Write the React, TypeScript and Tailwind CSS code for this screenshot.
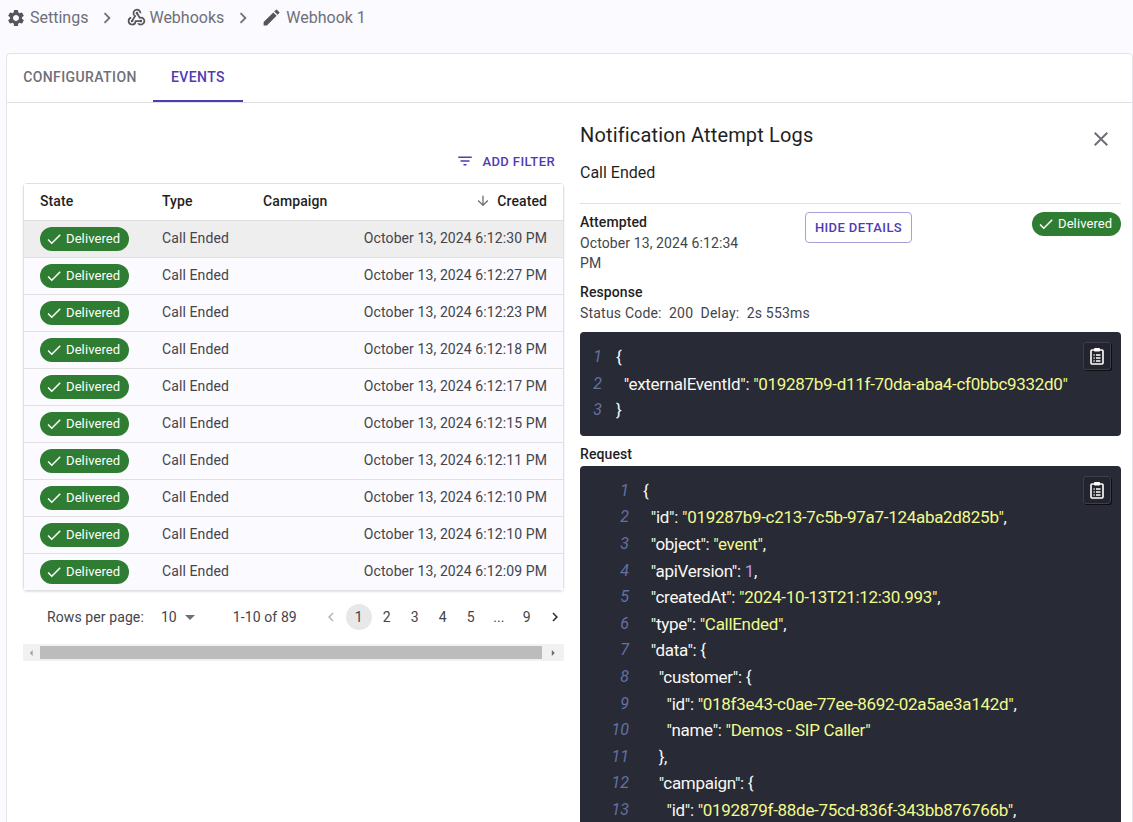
import React from 'react';
import {
  MdSettings,
  MdWebhook,
  MdEdit,
  MdChevronRight,
  MdChevronLeft,
  MdClose,
  MdFilterList,
  MdArrowDownward,
  MdArrowDropDown,
  MdCheck,
  MdArrowLeft,
  MdArrowRight,
} from 'react-icons/md';

const rows = [
  { time: 'October 13, 2024 6:12:30 PM', selected: true },
  { time: 'October 13, 2024 6:12:27 PM' },
  { time: 'October 13, 2024 6:12:23 PM' },
  { time: 'October 13, 2024 6:12:18 PM' },
  { time: 'October 13, 2024 6:12:17 PM' },
  { time: 'October 13, 2024 6:12:15 PM' },
  { time: 'October 13, 2024 6:12:11 PM' },
  { time: 'October 13, 2024 6:12:10 PM' },
  { time: 'October 13, 2024 6:12:10 PM' },
  { time: 'October 13, 2024 6:12:09 PM' },
];

type Tok = { t: string; c?: 'key' | 'str' | 'num' };

const Key = (t: string): Tok => ({ t, c: 'key' });
const Str = (t: string): Tok => ({ t, c: 'str' });
const Num = (t: string): Tok => ({ t, c: 'num' });

const responseLines: Tok[][] = [
  [Key('{')],
  [Key('  "externalEventId": '), Str('"019287b9-d11f-70da-aba4-cf0bbc9332d0"')],
  [Key('}')],
];

const requestLines: Tok[][] = [
  [Key('{')],
  [Key('  "id": '), Str('"019287b9-c213-7c5b-97a7-124aba2d825b"'), Key(',')],
  [Key('  "object": '), Str('"event"'), Key(',')],
  [Key('  "apiVersion": '), Num('1'), Key(',')],
  [Key('  "createdAt": '), Str('"2024-10-13T21:12:30.993"'), Key(',')],
  [Key('  "type": '), Str('"CallEnded"'), Key(',')],
  [Key('  "data": {')],
  [Key('    "customer": {')],
  [Key('      "id": '), Str('"018f3e43-c0ae-77ee-8692-02a5ae3a142d"'), Key(',')],
  [Key('      "name": '), Str('"Demos - SIP Caller"')],
  [Key('    },')],
  [Key('    "campaign": {')],
  [Key('      "id": '), Str('"0192879f-88de-75cd-836f-343bb876766b"'), Key(',')],
];

function Chip() {
  return (
    <span className="inline-flex items-center h-6 w-[89px] rounded-full bg-[#2e7d32] text-white text-[13px] pl-[5px]">
      <MdCheck size={18} className="shrink-0" />
      <span className="ml-[3px]">Delivered</span>
    </span>
  );
}

function ClipboardIcon() {
  return (
    <svg width="14" height="18" viewBox="0 0 14 18" fill="none" stroke="currentColor">
      <rect x="1" y="3" width="12" height="14" rx="1" strokeWidth="1.6" />
      <rect x="4" y="1" width="6" height="3.5" rx="0.8" fill="currentColor" stroke="none" />
      <path d="M3.5 8h1.2M6 8h4.5M3.5 11h1.2M6 11h4.5M3.5 14h1.2M6 14h4.5" strokeWidth="1.3" />
    </svg>
  );
}

function CodeBlock({ lines, numWidth }: { lines: Tok[][]; numWidth: string }) {
  return (
    <div className="relative bg-[#282a36] rounded pt-[12px] pb-[12px] text-[16px] leading-[26.6px] text-[#f8f8f2]">
      <button className="absolute top-[10px] right-[10px] w-[28px] h-[28px] flex items-center justify-center rounded-[3px] border border-[#3c3e49] bg-[#23242e] shadow-[1px_1px_0_#0d0d12] text-white">
        <ClipboardIcon />
      </button>
      {lines.map((line, i) => (
        <div key={i} className="flex">
          <span className={`${numWidth} shrink-0 text-right italic text-[#6272a4]`}>{i + 1}</span>
          <span className="pl-[14px] whitespace-pre text-[17px] tracking-[-0.3px]">
            {line.map((tok, j) => (
              <span
                key={j}
                className={tok.c === 'str' ? 'text-[#f1fa8c]' : tok.c === 'num' ? 'text-[#bd93f9]' : 'text-[#f8f8f2]'}
              >
                {tok.t}
              </span>
            ))}
          </span>
        </div>
      ))}
    </div>
  );
}

export default function App() {
  return (
    <div className="h-screen overflow-hidden bg-[#fafaff] font-['Roboto',sans-serif] text-[#1f1f24]">
      {/* Breadcrumbs */}
      <div className="h-[53px] pb-[18px] pl-[6px] flex items-center text-[16px] text-[#6f6f78]">
        <MdSettings size={20} className="text-[#55555c]" />
        <span className="ml-[4px]">Settings</span>
        <MdChevronRight size={22} className="ml-[8px] text-[#6f6f78]" />
        <MdWebhook size={21} className="ml-[8px] text-[#55555c]" />
        <span className="ml-[2px]">Webhooks</span>
        <MdChevronRight size={22} className="ml-[8px] text-[#6f6f78]" />
        <MdEdit size={21} className="ml-[7px] text-[#55555c]" />
        <span className="ml-[4px]">Webhook 1</span>
      </div>

      {/* Card */}
      <div className="ml-[6px] bg-white border border-[#e3e3e8] rounded-t h-[780px]">
        <div className="flex h-[49px] border-b border-[#e0e0e0] text-[14px] font-medium tracking-[0.4px]">
          <div className="w-[146px] h-[48px] flex items-center justify-center text-[#6f6f78] border-b-2 border-transparent">
            CONFIGURATION
          </div>
          <div className="w-[90px] h-[48px] flex items-center justify-center text-[#4f3bb3] border-b-2 border-[#4f3bb3]">
            EVENTS
          </div>
        </div>

        <div className="flex pl-4 pr-[11px]">
          {/* Left column */}
          <div className="w-[541px] shrink-0">
            <div className="h-[80px] flex items-end justify-end pb-[12px] pr-[9px] text-[13px] font-medium tracking-[0.4px] text-[#4f3bb3]">
              <MdFilterList size={18} className="mr-[8px] mb-[1px]" />
              <span>ADD FILTER</span>
            </div>

            <div className="rounded border border-[#e0e0e0] shadow-[0_1px_2px_rgba(0,0,0,0.12)] text-[14px] tracking-[0.1px]">
              <div className="flex items-center h-[36px] px-4 pb-[2px] font-medium bg-white">
                <div className="w-[122px]">State</div>
                <div className="w-[101px]">Type</div>
                <div>Campaign</div>
                <div className="ml-auto flex items-center">
                  <MdArrowDownward size={16} className="mr-[6px] text-[#6f6f78]" />
                  Created
                </div>
              </div>
              {rows.map((row, i) => (
                <div
                  key={i}
                  className={`flex items-center h-[37px] px-4 pb-px border-t border-[#e0e0e0] text-[#44444c] ${
                    row.selected ? 'bg-[#eeeeee]' : 'bg-[#fafaff]'
                  }`}
                >
                  <div className="w-[122px] flex">
                    <Chip />
                  </div>
                  <div className="w-[101px]">Call Ended</div>
                  <div className="ml-auto">{row.time}</div>
                </div>
              ))}
            </div>

            {/* Pagination */}
            <div className="flex items-center h-[52px] text-[14px] tracking-[0.1px] text-[#44444c] whitespace-nowrap">
              <span className="ml-[24px] shrink-0">Rows per page:</span>
              <span className="ml-[17px] shrink-0">10</span>
              <MdArrowDropDown size={24} className="ml-[1px] shrink-0 text-[#6f6f78]" />
              <span className="ml-[31px] shrink-0">1-10 of 89</span>
              <div className="ml-[21px] shrink-0 flex gap-[2px] items-center">
                <span className="w-[26px] h-[26px] flex items-center justify-center text-[#b5b5ba]">
                  <MdChevronLeft size={18} />
                </span>
                {['1', '2', '3', '4', '5', '...', '9'].map((p) => (
                  <span
                    key={p}
                    className={`w-[26px] h-[26px] flex items-center justify-center rounded-full ${
                      p === '1' ? 'bg-[#e8e8ea]' : ''
                    }`}
                  >
                    {p}
                  </span>
                ))}
                <span className="w-[26px] h-[26px] flex items-center justify-center text-[#2b2b30]">
                  <MdChevronRight size={18} />
                </span>
              </div>
            </div>

            {/* Horizontal scrollbar */}
            <div className="mt-px flex items-center h-[17px] bg-[#f1f1f1] text-[#6b6b6b]">
              <MdArrowLeft size={14} className="w-[17px] shrink-0 text-[#a3a3a3]" />
              <div className="h-[13px] flex-1 bg-[#bcbcbc]" />
              <MdArrowRight size={14} className="w-[22px] shrink-0" />
            </div>
          </div>

          {/* Right column */}
          <div className="ml-4 w-[541px] shrink-0">
            <div className="flex items-start justify-between pt-[20px]">
              <div className="text-[20px] leading-[24px] tracking-[0.15px]">Notification Attempt Logs</div>
              <MdClose size={24} className="mt-[4px] text-[#6f6f78] mr-[8px]" />
            </div>
            <div className="mt-[10px] text-[16px] leading-[24px]">Call Ended</div>
            <div className="mt-[18px] border-t border-[#e0e0e0]" />

            <div className="mt-2 flex items-start text-[14px] leading-[20px] tracking-[0.1px]">
              <div className="w-[225px] pr-[50px] text-[#44444c]">
                <div className="font-medium text-[#1f1f24]">Attempted</div>
                <div className="mt-px">October 13, 2024 6:12:34 PM</div>
              </div>
              <button className="w-[107px] h-[31px] rounded border border-[#a9a0db] text-[13px] font-medium tracking-[0.4px] text-[#4f3bb3]">
                HIDE DETAILS
              </button>
              <div className="ml-auto flex">
                <Chip />
              </div>
            </div>

            <div className="mt-[9px] text-[14px] leading-[20px] font-medium tracking-[0.1px]">Response</div>
            <div className="mt-px text-[14px] leading-[20px] text-[#44444c] whitespace-pre tracking-[0.2px]">
              Status Code:  200  Delay:  2s 553ms
            </div>

            <div className="mt-[9px]">
              <CodeBlock lines={responseLines} numWidth="w-[22px]" />
            </div>
            <div className="mt-[8px] h-[22px] text-[14px] leading-[20px] font-medium tracking-[0.1px]">Request</div>
            <div>
              <CodeBlock lines={requestLines} numWidth="w-[49px]" />
            </div>
          </div>
        </div>
      </div>
    </div>
  );
}
